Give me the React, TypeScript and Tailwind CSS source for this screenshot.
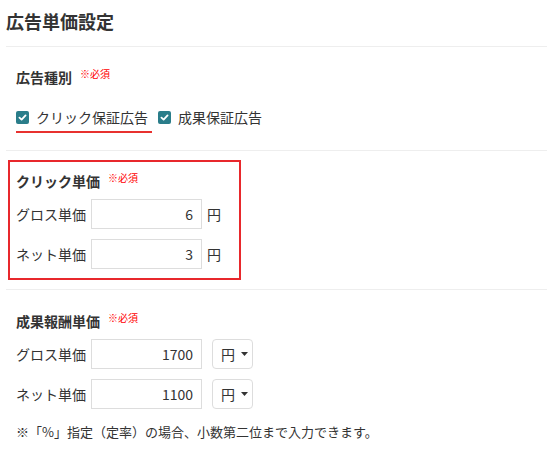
import React from "react";

const font = { fontFamily: '"Noto Sans CJK JP", "Noto Sans", sans-serif' };

function Check() {
  return (
    <span className="inline-flex h-[13px] w-[13px] items-center justify-center rounded-[2px] bg-[#2a7d8a]">
      <svg width="9" height="9" viewBox="0 0 10 10">
        <path d="M1.6 5.2 L4 7.4 L8.4 2.6" fill="none" stroke="#fff" strokeWidth="2" strokeLinecap="round" strokeLinejoin="round" />
      </svg>
    </span>
  );
}

function Req() {
  return <span className="ml-[8px] self-start text-[10px] leading-[14px] text-[#ff0000]">※必須</span>;
}

function Row({ label, value, select, className }: { label: string; value: string; select?: boolean; className?: string }) {
  return (
    <div className={"flex h-[30px] items-center " + (className || "")}>
      <div className="w-[75px] text-[14px] leading-[20px] text-[#333]">{label}</div>
      <div className="flex h-[30px] w-[111px] items-center justify-end border border-[#ddd] pr-[8px] text-[14px] text-[#333]">{value}</div>
      {select ? (
        <div className="ml-[10px] flex h-[30px] w-[41px] items-center gap-[6px] rounded-[4px] border border-[#ddd] pl-[8px] text-[14px] text-[#333]">
          <span>円</span>
          <svg width="7" height="4" viewBox="0 0 7 4">
            <path d="M0 0 L7 0 L3.5 4 Z" fill="#333" />
          </svg>
        </div>
      ) : (
        <span className="ml-[5px] text-[14px] text-[#333]">円</span>
      )}
    </div>
  );
}

export default function App() {
  return (
    <div className="h-[453px] w-[547px] bg-white text-[#333]" style={font}>
      <div className="ml-[6px] border-b border-[#eee] pb-[13px] pt-[9px]">
        <div className="text-[18px] font-bold leading-[24px] text-[#333]">広告単価設定</div>
      </div>
      <div className="ml-[6px] border-b border-[#eee] pb-[17px] pl-[10px] pt-[20px]">
        <div className="flex h-[20px] items-center">
          <span className="text-[14px] font-bold leading-[20px]">広告種別</span>
          <Req />
        </div>
        <div className="mt-[20px] flex items-start">
          <div className="flex items-center gap-[7px] border-b-2 border-[#e8312f] pb-[4px] pr-[4px]">
            <Check />
            <span className="text-[14px] leading-[20px]">クリック保証広告</span>
          </div>
          <div className="ml-[6px] flex h-[20px] items-center gap-[7px]">
            <Check />
            <span className="text-[14px] leading-[20px]">成果保証広告</span>
          </div>
        </div>
      </div>
      <div className="ml-[6px] border-b border-[#eee] pb-[9px] pt-[9px]">
        <div className="ml-[2px] w-[233px] border-2 border-[#e8282c] pb-[9px] pl-[6px] pt-[9px]">
          <div className="flex h-[20px] items-center">
            <span className="text-[14px] font-bold leading-[20px]">クリック単価</span>
            <Req />
          </div>
          <Row label="グロス単価" value="6" className="mt-[8px]" />
          <Row label="ネット単価" value="3" className="mt-[10px]" />
        </div>
      </div>
      <div className="ml-[6px] pl-[10px] pt-[21px]">
        <div className="flex h-[20px] items-center">
          <span className="text-[14px] font-bold leading-[20px]">成果報酬単価</span>
          <Req />
        </div>
        <Row label="グロス単価" value="1700" select className="mt-[8px]" />
        <Row label="ネット単価" value="1100" select className="mt-[10px]" />
        <div className="mt-[13px] text-[13px] leading-[20px]">※「%」指定（定率）の場合、小数第二位まで入力できます。</div>
      </div>
    </div>
  );
}
